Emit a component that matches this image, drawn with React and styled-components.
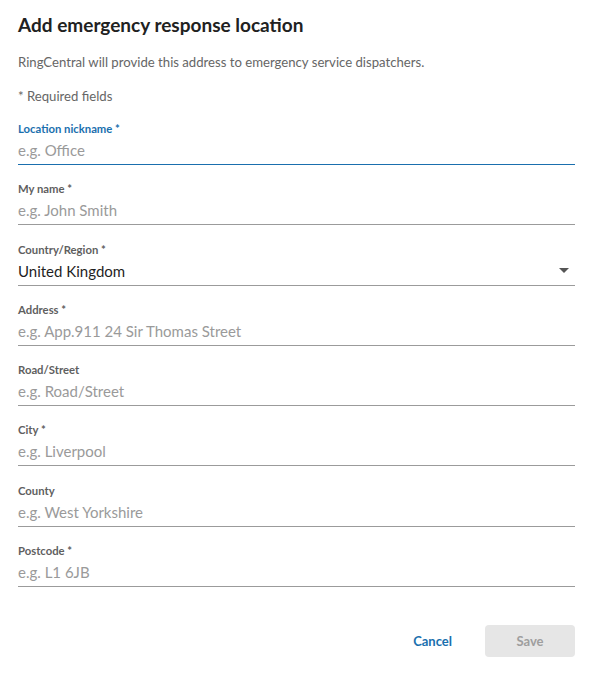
import React from "react";
import styled, { createGlobalStyle } from "styled-components";

const Global = createGlobalStyle`
  html, body { margin: 0; padding: 0; background: #fff; }
  body { font-family: Lato, "Open Sans", sans-serif; color: #1f1f1f; }
  * { box-sizing: border-box; }
`;

const Dialog = styled.div`
  width: 595px;
  height: 681px;
  padding: 12px 20px 0 18px;
  display: flex;
  flex-direction: column;
`;

const Title = styled.h1`
  margin: 0;
  font-size: 19px;
  line-height: 26px;
  font-weight: 700;
  color: #212121;
`;

const Text = styled.p`
  margin: ${(p) => p.$mt}px 0 0;
  font-size: 13.15px;
  line-height: 18px;
  color: #666;
`;

const Fields = styled.div`
  margin-top: 17px;
  display: flex;
  flex-direction: column;
  gap: 17.3px;
`;

const Field = styled.label`
  display: flex;
  flex-direction: column;
`;

const Label = styled.span`
  font-size: 11.3px;
  line-height: 14px;
  font-weight: 700;
  color: ${(p) => (p.$focused ? "#1a6fae" : "#5f5f5f")};
`;

const InputRow = styled.div`
  position: relative;
  display: flex;
  align-items: center;
  height: 29px;
  border-bottom: 1px solid ${(p) => (p.$focused ? "#1a6fae" : "#9b9b9b")};
`;

const Input = styled.input`
  flex: 1;
  border: none;
  outline: none;
  padding: 0;
  margin: 0;
  font-family: Lato, "Open Sans", sans-serif;
  font-size: 15px;
  color: #1f1f1f;
  background: transparent;
  caret-color: #1f1f1f;
  &::placeholder { color: #9a9a9a; }
`;

const SelectValue = styled.span`
  flex: 1;
  font-size: 15px;
  color: #1f1f1f;
`;

const Arrow = styled.span`
  width: 0;
  height: 0;
  margin-right: 6px;
  border-left: 5px solid transparent;
  border-right: 5px solid transparent;
  border-top: 5px solid #555;
`;

const Footer = styled.div`
  margin-top: 38px;
  display: flex;
  justify-content: flex-end;
  align-items: center;
  gap: 16px;
`;

const Button = styled.button`
  font-family: Lato, "Open Sans", sans-serif;
  font-size: 13px;
  font-weight: 700;
  height: 32px;
  border: none;
  border-radius: 4px;
  cursor: pointer;
  background: ${(p) => (p.$primary ? "#e6e6e6" : "transparent")};
  color: ${(p) => (p.$primary ? "#9e9e9e" : "#1a6fae")};
  width: ${(p) => (p.$primary ? "90px" : "auto")};
  padding: 0 ${(p) => (p.$primary ? 0 : 17)}px;
`;

const fields = [
  { label: "Location nickname *", ph: "e.g. Office", focused: true },
  { label: "My name *", ph: "e.g. John Smith" },
  { label: "Country/Region *", select: "United Kingdom" },
  { label: "Address *", ph: "e.g. App.911 24 Sir Thomas Street" },
  { label: "Road/Street", ph: "e.g. Road/Street" },
  { label: "City *", ph: "e.g. Liverpool" },
  { label: "County", ph: "e.g. West Yorkshire" },
  { label: "Postcode *", ph: "e.g. L1 6JB" },
];

export default function App() {
  return (
    <>
      <Global />
      <Dialog>
        <Title>Add emergency response location</Title>
        <Text $mt={15}>RingCentral will provide this address to emergency service dispatchers.</Text>
        <Text $mt={16}>* Required fields</Text>
        <Fields>
          {fields.map((f) => (
            <Field key={f.label}>
              <Label $focused={f.focused}>{f.label}</Label>
              <InputRow $focused={f.focused}>
                {f.select ? (
                  <>
                    <SelectValue>{f.select}</SelectValue>
                    <Arrow />
                  </>
                ) : (
                  <Input placeholder={f.ph} autoFocus={f.focused} />
                )}
              </InputRow>
            </Field>
          ))}
        </Fields>
        <Footer>
          <Button>Cancel</Button>
          <Button $primary disabled>Save</Button>
        </Footer>
      </Dialog>
    </>
  );
}
